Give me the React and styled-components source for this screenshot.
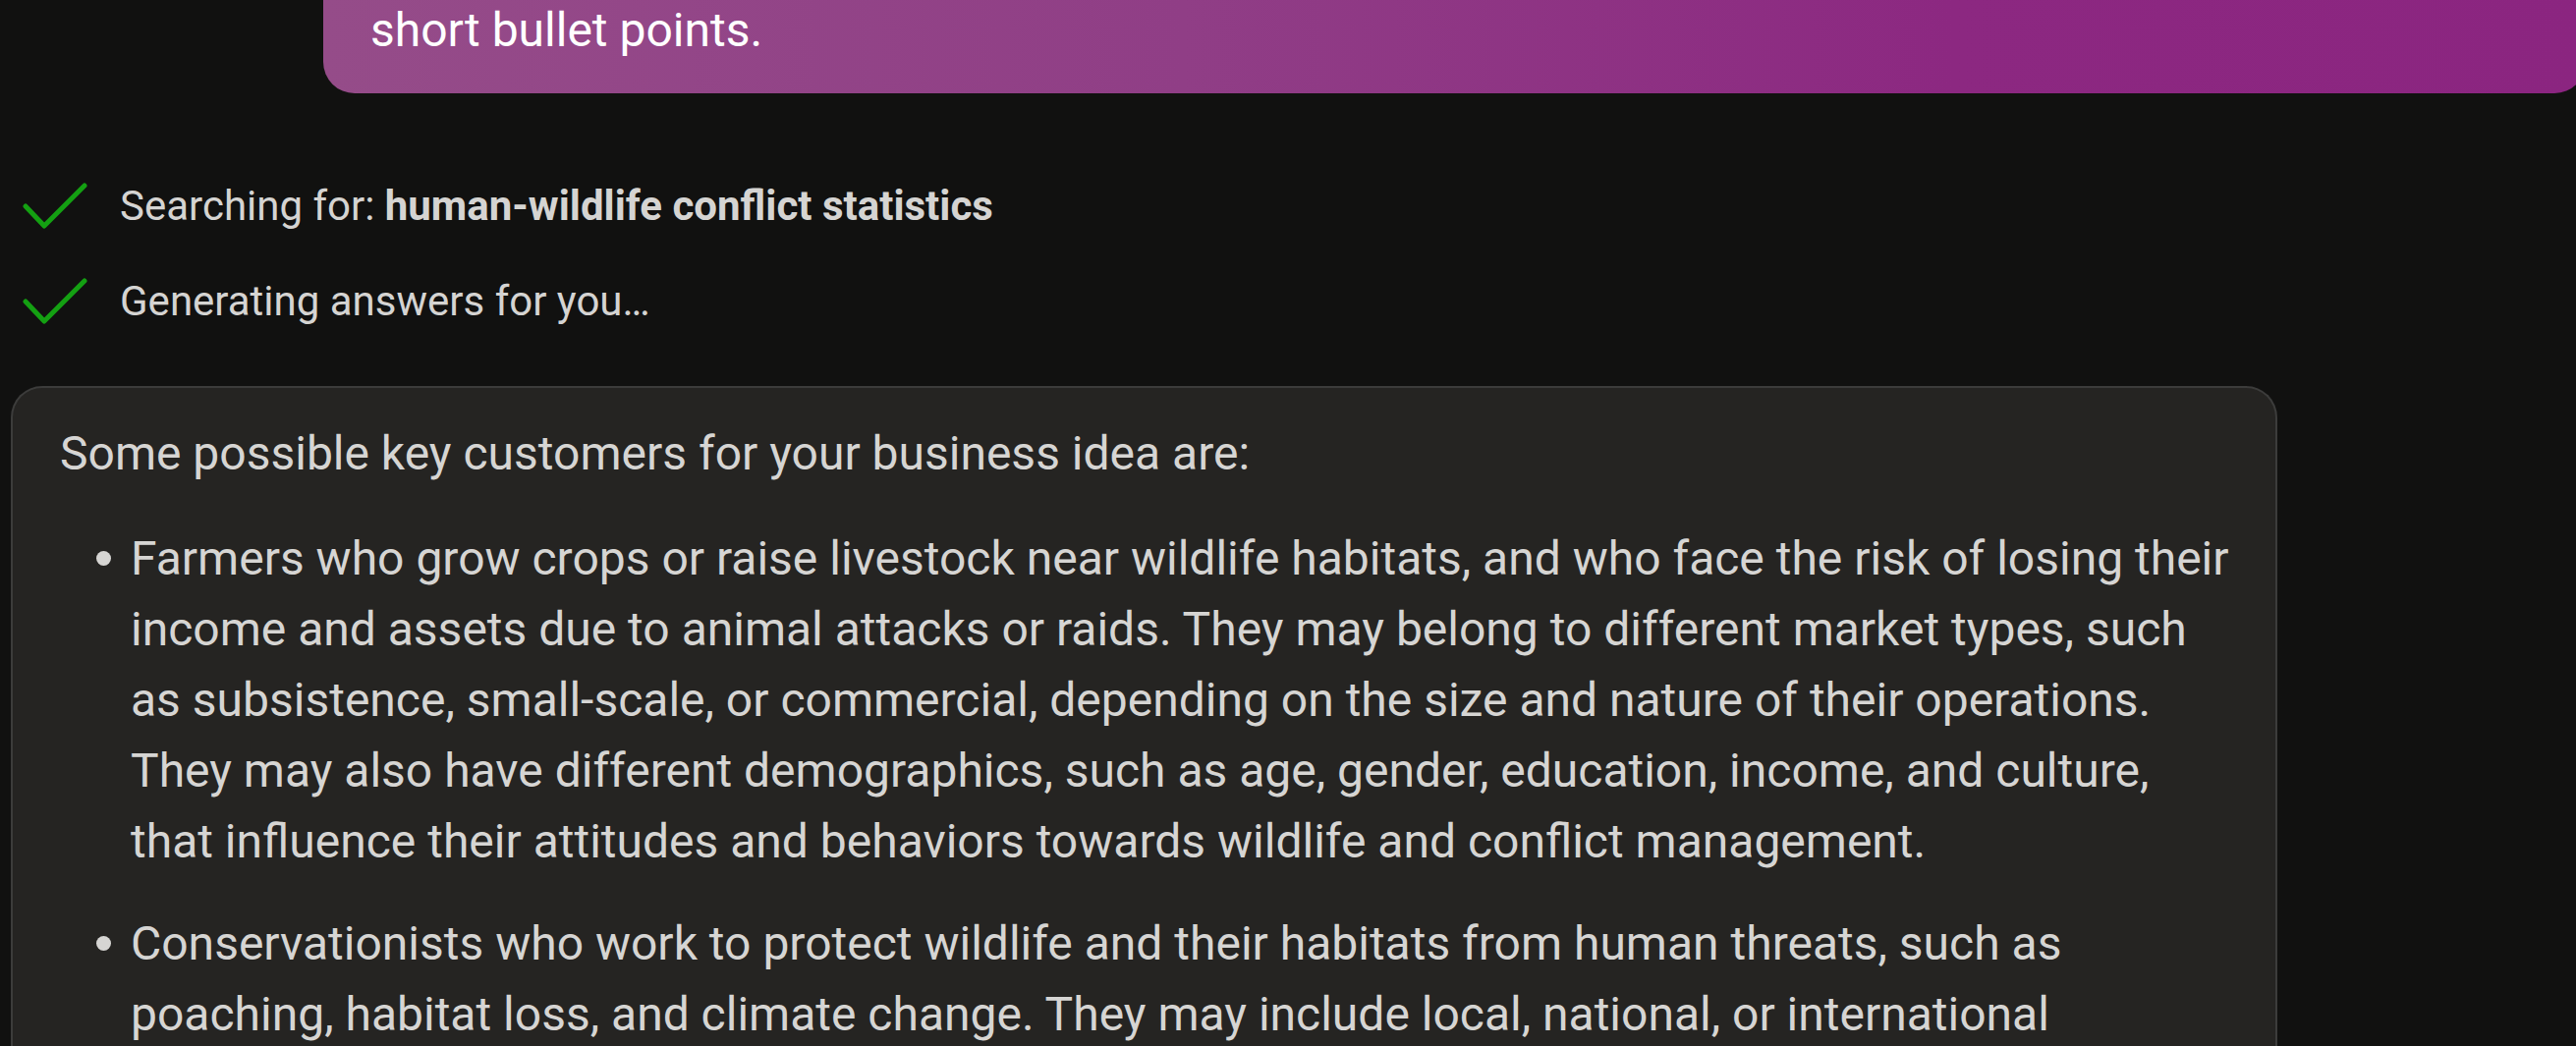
import React from "react";
import styled, { createGlobalStyle } from "styled-components";

const GlobalStyle = createGlobalStyle`
    html, body {
        margin: 0;
        padding: 0;
        background: #111110;
        overflow: hidden;
    }
    body {
        font-family: Roboto, "Noto Sans", "Liberation Sans", sans-serif;
        -webkit-font-smoothing: antialiased;
    }
    * { box-sizing: border-box; }
`;

const Page = styled.main`
    width: 2622px;
    height: 1065px;
    overflow: hidden;
    display: flex;
    flex-direction: column;
`;

const UserBubble = styled.div`
    margin: -37px -10px 0 329px;
    padding: 32px 48px 28px;
    border-radius: 32px;
    background: linear-gradient(90deg, #954c89 0%, #903e86 38%, #8c2881 72%, #8b2580 100%);
    color: #ffffff;
    font-size: 48px;
    line-height: 72px;
`;

const Steps = styled.ul`
    list-style: none;
    margin: 83px 0 0;
    padding: 0 0 0 23px;
    display: flex;
    flex-direction: column;
    gap: 34px;
`;

const Step = styled.li`
    display: flex;
    align-items: center;
    gap: 33px;
    color: #d5d4d2;
    font-size: 42px;
    line-height: 63px;
    b { font-weight: 700; }
`;

const CheckIcon = () => (
    <svg width="66" height="48" viewBox="0 0 66 48" fill="none">
        <path d="M3 24 L22 44 L63 3" stroke="#14a012" strokeWidth="5" strokeLinecap="round" strokeLinejoin="round" />
    </svg>
);

const Answer = styled.section`
    margin: 55px 0 0 11px;
    width: 2307px;
    padding: 31px 44px 0 48px;
    background: #252422;
    border: 2px solid #3c3c3b;
    border-bottom: none;
    border-radius: 32px 32px 0 0;
    color: #d6d5d3;
    font-size: 48px;
    line-height: 72px;
    flex: 1;
    p { margin: 0 0 35px; }
`;

const Bullets = styled.ul`
    list-style: none;
    margin: 0;
    padding: 0;
`;

const Bullet = styled.li`
    position: relative;
    padding-left: 72px;
    margin-bottom: 32px;
    &::before {
        content: "";
        position: absolute;
        left: 37px;
        top: 28px;
        width: 15px;
        height: 15px;
        border-radius: 50%;
        background: #d6d5d3;
    }
`;

const customers = [
    "Farmers who grow crops or raise livestock near wildlife habitats, and who face the risk of losing their income and assets due to animal attacks or raids. They may belong to different market types, such as subsistence, small-scale, or commercial, depending on the size and nature of their operations. They may also have different demographics, such as age, gender, education, income, and culture, that influence their attitudes and behaviors towards wildlife and conflict management.",
    "Conservationists who work to protect wildlife and their habitats from human threats, such as poaching, habitat loss, and climate change. They may include local, national, or international",
];

export default function App() {
    return (
        <>
            <GlobalStyle />
            <Page>
                <UserBubble>short bullet points.</UserBubble>
                <Steps>
                    <Step>
                        <CheckIcon />
                        <span>Searching for: <b>human-wildlife conflict statistics</b></span>
                    </Step>
                    <Step>
                        <CheckIcon />
                        <span>Generating answers for you…</span>
                    </Step>
                </Steps>
                <Answer>
                    <p>Some possible key customers for your business idea are:</p>
                    <Bullets>
                        {customers.map((text, i) => <Bullet key={i}>{text}</Bullet>)}
                    </Bullets>
                </Answer>
            </Page>
        </>
    );
}
